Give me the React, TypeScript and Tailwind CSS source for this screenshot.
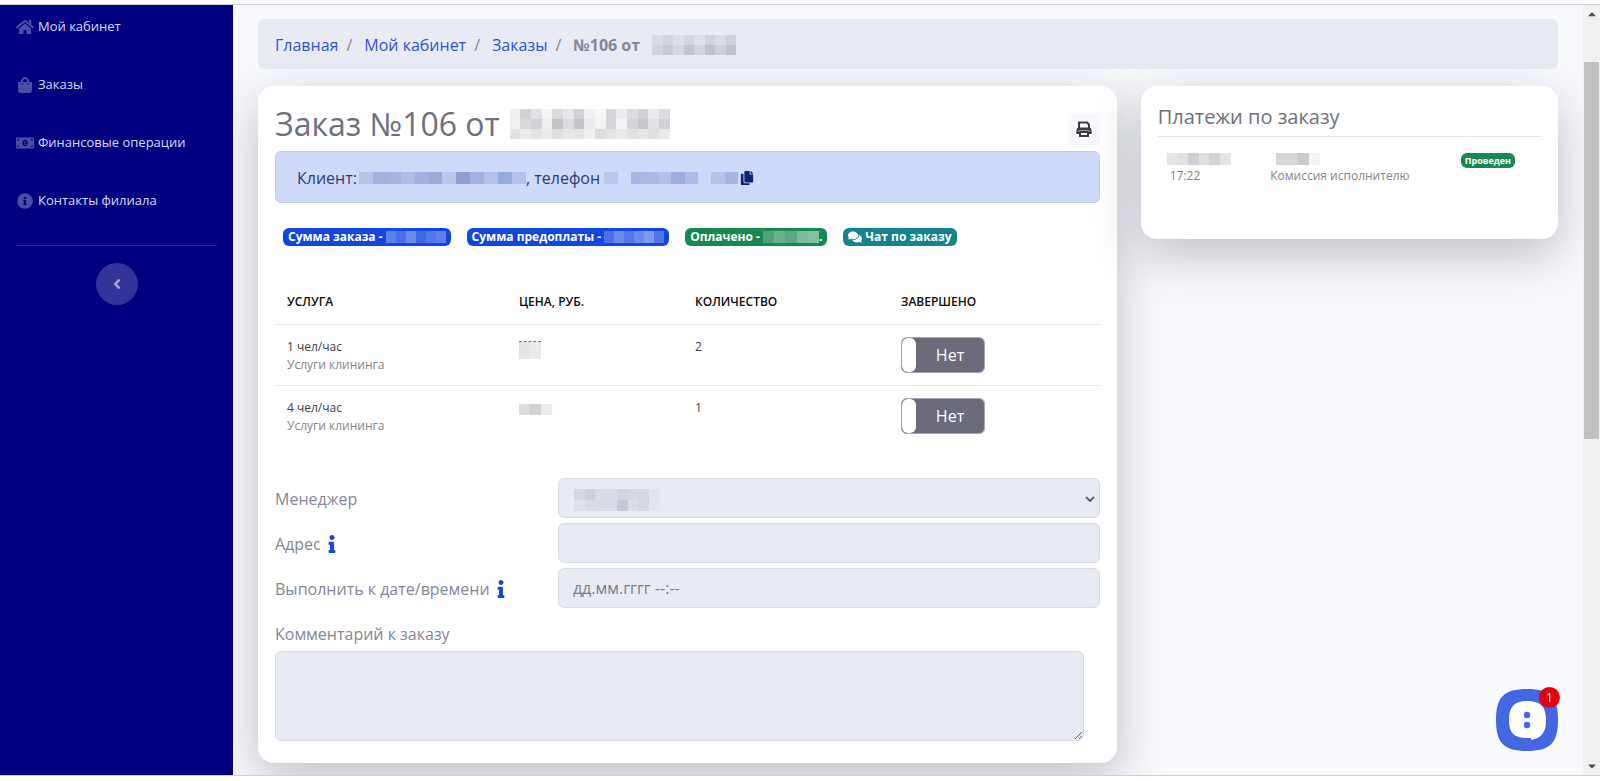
import { FaHome, FaShoppingBag, FaMoneyBillAlt, FaInfoCircle, FaInfo, FaAngleLeft, FaComments, FaCopy, FaCaretUp, FaCaretDown } from "react-icons/fa";

const menu = [
  { title: "Мой кабинет", icon: FaHome },
  { title: "Заказы", icon: FaShoppingBag },
  { title: "Финансовые операции", icon: FaMoneyBillAlt },
  { title: "Контакты филиала", icon: FaInfoCircle },
];

const services = [
  { id: 1, name: "1 чел/час", group: "Услуги клининга", count: 2, price: ["bg-[#e4e3e7]", "bg-[#e9eaec]"], size: "mt-1 h-[18px] w-[22px] border-t border-dashed border-[#77787f]" },
  { id: 2, name: "4 чел/час", group: "Услуги клининга", count: 1, price: ["bg-[#dcdcdd]", "bg-[#d0d0d2]", "bg-[#e8ebef]"], size: "mt-[6px] h-[11px] w-[33px]" },
];

// hidden personal data, drawn as rows of coloured cells
const Mask = ({ rows, className }: { rows: string[][]; className: string }) => (
  <span aria-hidden="true" className={`flex flex-col ${className}`}>
    {rows.map((row, i) => (
      <span key={i} className="flex flex-1">
        {row.map((cell, j) => (
          <span key={j} className={`flex-1 ${cell}`} />
        ))}
      </span>
    ))}
  </span>
);

const PrintIcon = () => (
  <svg viewBox="0 0 16 16" className="size-4" fill="none" stroke="currentColor" strokeWidth="2">
    <path d="M3 7V1.5h8L13 3.500V7" />
    <path d="M1.500 12.500V9.500Q1.500 7.500 3.500 7.500h9q2 0 2 2v3" />
    <path d="M1 8.500h14M0.500 12h3M12.500 12h3" />
    <path d="M4 11h8v4H4z" />
  </svg>
);

const Sidebar = () => (
  <nav className="flex w-[233px] shrink-0 flex-col bg-[#000080] px-4 pt-[2px]">
    <ul>
      {menu.map(({ title, icon: Icon }) => (
        <li key={title} className="mb-[18px]">
          <a href="#" className="flex h-10 items-center gap-1 text-[13px] text-[#d9d9f0]">
            <Icon className="w-[18px] text-[16px] text-[#4d4da6]" />
            {title}
          </a>
        </li>
      ))}
    </ul>
    <hr className="mt-[6px] border-[#262693]" />
    <button
      type="button"
      aria-label="Свернуть меню"
      className="mx-auto mt-[17px] flex size-[42px] items-center justify-center rounded-full bg-[#333399] text-[#a6a6d6]"
    >
      <FaAngleLeft className="text-[16px]" />
    </button>
  </nav>
);

const Breadcrumbs = () => (
  <nav className="flex h-[50px] items-center gap-3 rounded-md bg-[#e8ebf3] px-[17px] pt-[2px] text-[16px] text-[#858796]">
    <span className="flex gap-2">
      <a href="#" className="text-[#3553d4]">Главная</a>/
    </span>
    <span className="flex gap-2">
      <a href="#" className="text-[#3553d4]">Мой кабинет</a>/
    </span>
    <span className="flex gap-2">
      <a href="#" className="text-[#3553d4]">Заказы</a>/
    </span>
    <span className="flex items-center gap-3 font-bold">
      №106 от
      <Mask
        className="h-5 w-[84px]"
        rows={[
          ["bg-[#d9dce3]", "bg-[#d3d5dd]", "bg-[#dddfe6]", "bg-[#d5d7df]", "bg-[#dfe1e8]", "bg-[#d2d4dc]", "bg-[#dbdde5]", "bg-[#d0d2da]"],
          ["bg-[#d2d4dc]", "bg-[#c9cbd3]", "bg-[#d6d8df]", "bg-[#c4c6cf]", "bg-[#d3d5dc]", "bg-[#c0c2cc]", "bg-[#cfd1d9]", "bg-[#c2c4cd]"],
        ]}
      />
    </span>
  </nav>
);

const badge = "flex h-[18px] items-center gap-[3px] rounded-md px-[5px] text-[12px] font-bold text-white";

const Badges = () => (
  <div className="flex flex-wrap gap-4 px-2">
    <span className={`${badge} bg-[#1446df]`}>
      Сумма заказа -
      <Mask className="h-3 w-[60px]" rows={[["bg-[#5c80ea]", "bg-[#4a71e7]", "bg-[#6a8bec]", "bg-[#3f68e5]", "bg-[#5078e8]", "bg-[#5b80ea]"]]} />
    </span>
    <span className={`${badge} bg-[#1446df]`}>
      Сумма предоплаты -
      <Mask className="h-3 w-[60px]" rows={[["bg-[#4a71e7]", "bg-[#6a8bec]", "bg-[#5078e8]", "bg-[#6a8bec]", "bg-[#7d9aef]", "bg-[#4f76e8]"]]} />
    </span>
    <span className={`${badge} bg-[#198754]`}>
      Оплачено -
      <span className="flex items-center">
        <Mask className="h-3 w-14" rows={[["bg-[#4fa37b]", "bg-[#6bb18f]", "bg-[#5aa983]", "bg-[#7cbb9c]", "bg-[#84bfa2]"]]} />
        .
      </span>
    </span>
    <a href="#" className={`${badge} bg-[#17828c]`}>
      <FaComments className="text-[14px]" />
      Чат по заказу
    </a>
  </div>
);

const ServicesTable = () => (
  <table className="mt-[34px] w-full table-fixed text-left text-[12px]">
    <thead>
      <tr className="h-[44px] border-b border-[#e6e7ea] text-[#0c0d10] uppercase">
        <th className="w-[232px] px-3 font-semibold">Услуга</th>
        <th className="w-[176px] px-3 font-semibold">Цена, руб.</th>
        <th className="w-[206px] px-3 font-semibold">Количество</th>
        <th className="px-3 font-semibold">Завершено</th>
      </tr>
    </thead>
    <tbody>
      {services.map((item) => (
        <tr key={item.id} className="border-b border-[#e6e7ea] align-top last:border-0">
          <td className="px-3 pt-3 leading-5 text-[#3a3b45]">
            {item.name}
            <div className="leading-4 text-[#858585]">{item.group}</div>
          </td>
          <td className="px-3 pt-3">
            <Mask className={item.size} rows={[item.price]} />
          </td>
          <td className="px-3 pt-3 leading-5 text-[#3a3b45]">{item.count}</td>
          <td className="px-3 py-3">
            <button
              type="button"
              role="switch"
              aria-checked="false"
              aria-label={item.name}
              className="flex h-9 w-[84px] overflow-hidden rounded-md border border-[#a5a6b4] bg-[#6b6b7b] text-[16px] text-white"
            >
              <span className="h-full w-[14px] rounded-md bg-white" />
              <span className="flex h-full flex-1 items-center justify-center">Нет</span>
            </button>
          </td>
        </tr>
      ))}
    </tbody>
  </table>
);

const field = "w-full rounded-md border border-[#d9dbe3] bg-[#e8ebf4]";
const label = "flex w-1/3 items-center gap-[6px] px-3 pt-[2px]";

const OrderForm = () => (
  <form className="mt-8 text-[16px] text-[#858796]">
    <div className="-mx-3 mb-[5px] flex">
      <label htmlFor="manager" className={label}>Менеджер</label>
      <div className="relative w-2/3 px-3">
        <select id="manager" disabled className={`${field} block h-10 appearance-none opacity-100`} />
        <Mask
          className="absolute top-[11px] left-7 h-[22px] w-[86px]"
          rows={[
            ["bg-[#d6d8df]", "bg-[#ced0d8]", "bg-[#d9dbe4]", "bg-[#d9dbe6]", "bg-[#d3d6e2]", "bg-[#d7d9e0]", "bg-[#d6d8e0]", "bg-[#e2e5ee]"],
            ["bg-[#dfe1e8]", "bg-[#dadce3]", "bg-[#d9dbe3]", "bg-[#d8dae5]", "bg-[#c6c8d5]", "bg-[#dcdee4]", "bg-[#d7d9e2]", "bg-[#e3e6ef]"],
          ]}
        />
        <svg viewBox="0 0 10 6" className="pointer-events-none absolute top-[18px] right-[17px] h-[6px] w-[10px]" fill="none" stroke="#5f606c" strokeWidth="2">
          <path d="M1 1l4 4 4-4" />
        </svg>
      </div>
    </div>
    <div className="-mx-3 mb-[5px] flex">
      <label htmlFor="address" className={label}>
        Адрес <FaInfo className="w-[10px] text-[18px] text-[#1f45d8]" />
      </label>
      <div className="w-2/3 px-3">
        <input id="address" type="text" disabled className={`${field} block h-10 px-[14px]`} />
      </div>
    </div>
    <div className="-mx-3 flex">
      <label htmlFor="due" className={label}>
        Выполнить к дате/времени <FaInfo className="w-[10px] text-[18px] text-[#1f45d8]" />
      </label>
      <div className="w-2/3 px-3">
        <input id="due" type="text" disabled placeholder="дд.мм.гггг --:--" className={`${field} block h-10 px-[14px] placeholder:text-[#7b7c88]`} />
      </div>
    </div>
    <label htmlFor="comment" className="mt-[14px] block leading-6">Комментарий к заказу</label>
    <div className="mt-[5px] pr-4">
      <textarea id="comment" className={`${field} block h-[90px] px-[14px]`} />
    </div>
  </form>
);

const Order = () => (
  <section className="col-span-8 rounded-2xl bg-white px-[17px] pt-4 pb-[22px] shadow-[0_16px_48px_rgba(20,22,40,0.25)]">
    <div className="flex h-[49px] items-center justify-between">
      <h1 className="flex items-center gap-[10px] pb-[6px] text-[32px] leading-10 text-[#6e707e]">
        Заказ №106 от
        <Mask
          className="h-[30px] w-40"
          rows={[
            ["bg-[#eeeeef]", "bg-[#d3d3d7]", "bg-[#e2e2e4]", "bg-[#f4f4f4]", "bg-[#dadadd]", "bg-[#e6e6e8]", "bg-[#d2d2d6]", "bg-[#f0f2f2]", "bg-[#f6f6f6]", "bg-[#d6d5db]", "bg-[#ebebed]", "bg-[#dddde0]", "bg-[#d1d1d5]", "bg-[#e9e9eb]", "bg-[#dbdce0]"],
            ["bg-[#f0f0f0]", "bg-[#d9d9dc]", "bg-[#d2d2d6]", "bg-[#eeeeee]", "bg-[#c4c3c9]", "bg-[#dcdcde]", "bg-[#c5c5c9]", "bg-[#e6ebec]", "bg-[#f3f3f3]", "bg-[#d3d3d8]", "bg-[#f3f3f3]", "bg-[#d5d5d9]", "bg-[#c8c8cc]", "bg-[#e2e2e4]", "bg-[#cfd1d7]"],
            ["bg-[#e2e2e3]", "bg-[#ebebec]", "bg-[#e3e3e4]", "bg-[#e9e9ea]", "bg-[#dfdfe1]", "bg-[#e6e6e7]", "bg-[#e3e3e4]", "bg-[#f0f0f0]", "bg-[#dddddf]", "bg-[#e3e3e5]", "bg-[#e9e9ea]", "bg-[#e1e1e2]", "bg-[#e6e6e7]", "bg-[#dfdfe1]", "bg-[#e9e9ea]"],
          ]}
        />
      </h1>
      <button type="button" aria-label="Печать" className="mt-1 flex size-8 items-center justify-center bg-[#f8f9fc] text-[#3a3b45]">
        <PrintIcon />
      </button>
    </div>
    <div className="flex h-[52px] items-center rounded-md border border-[#bfcbef] bg-[#cfd9f9] px-[21px] pt-[2px] text-[16px] text-[#2d3b78]">
      Клиент:
      <Mask
        className="ml-[2px] h-3 w-[167px]"
        rows={[["bg-[#b7c2e8]", "bg-[#a5b1da]", "bg-[#a8b4de]", "bg-[#b1bce4]", "bg-[#a5aede]", "bg-[#9fa9d4]", "bg-[#bac5ec]", "bg-[#8f9fd2]", "bg-[#a3b1e0]", "bg-[#b5c0e8]", "bg-[#98a9dc]", "bg-[#b4c1ea]"]]}
      />
      , телефон
      <Mask
        className="mr-[2px] ml-1 h-3 w-[134px]"
        rows={[["bg-[#bac7ee]", "bg-[#cfd9f9]", "bg-[#a9b7e2]", "bg-[#aab8e3]", "bg-[#b1bfe9]", "bg-[#9faddd]", "bg-[#adbbe6]", "bg-[#cdd7f8]", "bg-[#b4c2ea]", "bg-[#a9b5df]"]]}
      />
      <button type="button" aria-label="Скопировать телефон" className="text-[14px] text-[#0a2472]">
        <FaCopy />
      </button>
    </div>
    <div className="mt-[25px]">
      <Badges />
    </div>
    <ServicesTable />
    <OrderForm />
  </section>
);

const Payments = () => (
  <section className="col-span-4 h-[153px] self-start rounded-2xl bg-white px-[17px] pt-[17px] shadow-[0_16px_48px_rgba(20,22,40,0.25)]">
    <h2 className="border-b border-[#e3e4e8] pb-[5px] text-[20px] leading-[28px] text-[#6e707e]">Платежи по заказу</h2>
    <div className="mt-4 flex px-3 text-[12px] leading-4 text-[#858585]">
      <div className="w-[28%]">
        <Mask className="-ml-[3px] h-3 w-16" rows={[["bg-[#e6e6e8]", "bg-[#e1e1e3]", "bg-[#cfcfd6]", "bg-[#dfdfe1]", "bg-[#d3d3d6]", "bg-[#e3e3e4]"]]} />
        <div className="mt-[3px]">17:22</div>
      </div>
      <div className="flex-1">
        <Mask className="ml-[6px] h-3 w-11" rows={[["bg-[#d6d6d7]", "bg-[#d6d6d7]", "bg-[#cbcbcd]", "bg-[#f3f3f3]"]]} />
        <div className="mt-[3px]">Комиссия исполнителю</div>
      </div>
      <span className="mr-[14px] flex h-[15px] items-center rounded-md bg-[#198754] px-1 text-[9px] font-bold text-white">Проведен</span>
    </div>
  </section>
);

const App = () => {
  return (
    <div className="flex h-screen flex-col bg-white pt-1 pb-[5px] font-['Open_Sans','Noto_Sans',sans-serif]">
      <div className="flex min-h-0 flex-1 overflow-hidden border-y border-[#cfd1d4]">
        <Sidebar />
        <main className="min-w-0 flex-1 overflow-hidden bg-[#f8f9fd] px-[25px] pt-[14px]">
          <Breadcrumbs />
          <div className="mt-[17px] grid grid-cols-12 gap-6">
            <Order />
            <Payments />
          </div>
        </main>
        <div aria-hidden="true" className="flex w-[17px] shrink-0 flex-col items-center justify-between bg-[#f1f1f1] text-[12px] text-[#505050]">
          <FaCaretUp className="mt-[3px]" />
          <div className="mt-[42px] mb-auto h-[49%] w-[15px] bg-[#c1c1c1]" />
          <FaCaretDown className="mb-[3px]" />
        </div>
      </div>
      <button type="button" aria-label="Чат" className="fixed right-[42px] bottom-[30px] size-[62px]">
        <svg viewBox="0 0 62 62" className="size-full">
          <path d="M31 0C54 0 62 8 62 31S54 62 31 62 0 54 0 31 8 0 31 0Z" fill="#4466e2" />
          <path d="M31 12C45 12 50 18 50 31c0 12-4 18-15 20v-2h-4C18 49 13 44 13 31S18 12 31 12Z" fill="#fff" />
          <circle cx="31" cy="26" r="3.2" fill="#4466e2" />
          <circle cx="31" cy="36" r="3.2" fill="#4466e2" />
        </svg>
        <span className="absolute -top-[2px] -right-[2px] flex size-[21px] items-center justify-center rounded-full bg-[#e3000f] text-[12px] text-white">1</span>
      </button>
    </div>
  );
};

export default App;
